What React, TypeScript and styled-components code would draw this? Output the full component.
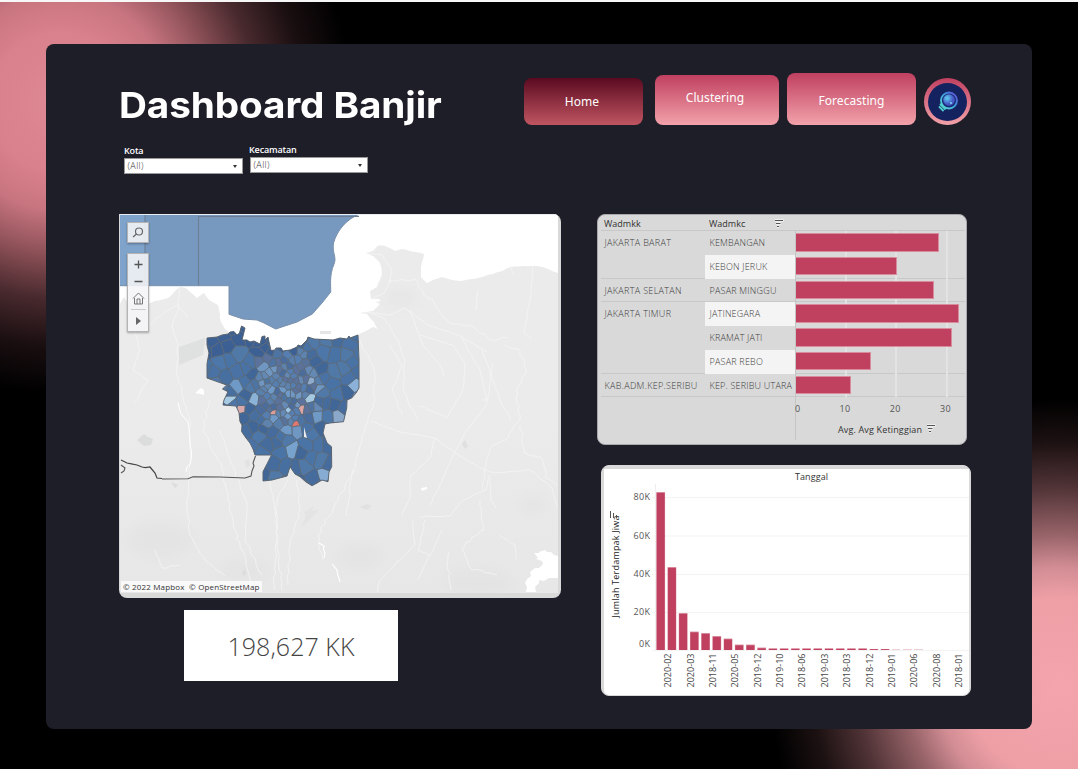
import React from "react";
import styled, { createGlobalStyle } from "styled-components";

const Global = createGlobalStyle`
  * { box-sizing: border-box; }
  body { margin: 0; background: #000; font-family: "Open Sans", "Noto Sans", sans-serif; }
`;

const Page = styled.div`
  height: 769px;
  padding: 42px 46px 0;
  border-top: 2px solid #f7f7f7;
  background:
    radial-gradient(circle at 60px 100px, #de8994 0, #d9818c 70px, #c87580 108px, #93545b 148px, #492a2e 196px, #190e10 245px, transparent 292px),
    radial-gradient(circle at 1058px 685px, #f4a4ac 0, #ee9fa6 90px, #d28d94 120px, #966368 153px, #503336 200px, #1c1112 245px, transparent 288px),
    #000;
`;

const Panel = styled.main`
  height: 685px;
  padding: 29px 61px 0 73px;
  border-radius: 8px;
  background: #1e1e29;
`;

const Header = styled.header`
  display: flex;
  justify-content: space-between;
  height: 52px;
`;

const Title = styled.h1`
  width: 300px;
  margin: 9px 0 0;
  color: #fff;
  font: 700 36px/46px Inter, sans-serif;
  letter-spacing: -0.1px;
  white-space: nowrap;
  transform: scaleX(1.075);
  transform-origin: 0 0;
`;

const Nav = styled.nav`
  display: flex;
  align-items: flex-end;
`;

const NavButton = styled.button<{ $w: number; $h: number; $gap: number; $pad: string; $active?: boolean }>`
  width: ${(p) => p.$w}px;
  height: ${(p) => p.$h}px;
  margin: 0 ${(p) => p.$gap}px 0 0;
  padding: ${(p) => p.$pad};
  border: 0;
  border-radius: 8px;
  color: #fff;
  font: 400 12px "Noto Sans", sans-serif;
  letter-spacing: 0.05px;
  background: ${(p) => (p.$active ? "linear-gradient(#5a0a20, #c05561)" : "linear-gradient(#c04060, #f2a2aa)")};
`;

const Avatar = styled.div`
  display: flex;
  align-items: center;
  justify-content: center;
  width: 47px;
  height: 47px;
  border-radius: 50%;
  background: linear-gradient(#c04060, #f2a2aa);
`;

const Filters = styled.div`
  display: flex;
  gap: 7px;
  height: 89px;
  padding: 18px 0 0 5px;
`;

const Filter = styled.label<{ $raise?: boolean }>`
  display: block;
  width: 119px;
  margin-top: ${(p) => (p.$raise ? 0 : 1)}px;
  margin-left: ${(p) => (p.$raise ? -1 : 0)}px;
  color: #fff;
  font: 600 9px/14px "Open Sans", sans-serif;
  letter-spacing: -0.15px;
`;

const Select = styled.span<{ $shift?: boolean }>`
  display: flex;
  align-items: center;
  justify-content: space-between;
  width: ${(p) => (p.$shift ? 118 : 119)}px;
  height: 16px;
  margin-left: ${(p) => (p.$shift ? 1 : 0)}px;
  padding: 0 5px 0 2.5px;
  border: 1px solid #999;
  background: #fff;
  color: #333;
  font-weight: 300;
  letter-spacing: 0.4px;
`;

const Arrow = styled.i`
  border: 2px solid transparent;
  border-top: 3px solid #333;
  border-bottom: 0;
`;

const Body = styled.div`
  display: flex;
  justify-content: space-between;
`;

const Column = styled.section<{ $gap: number }>`
  display: flex;
  flex-direction: column;
  gap: ${(p) => p.$gap}px;
`;

const MapCard = styled.div`
  display: grid;
  width: 442px;
  height: 384px;
  padding: 0 0 0 1px;
  border-radius: 0 8px 8px 8px;
  background: #d9d9d9;
  overflow: hidden;
  & > * { grid-area: 1 / 1; }
`;

const MapControls = styled.div`
  display: flex;
  flex-direction: column;
  gap: 10px;
  padding: 8px 0 0 7px;
  z-index: 1;
  justify-self: start;
`;

const ControlBox = styled.div<{ $h: number }>`
  width: 22px;
  height: ${(p) => p.$h}px;
  border: 1px solid #b4b4b4;
  background: rgba(245, 245, 247, 0.88);
  box-shadow: 0 1px 2px rgba(0, 0, 0, 0.3);
  svg { display: block; }
`;

const Attribution = styled.div`
  z-index: 1;
  align-self: end;
  justify-self: start;
  width: 141px;
  height: 11px;
  margin: 0 0 6px 1px;
  padding-left: 2px;
  background: rgba(255, 255, 255, 0.75);
  color: #333;
  font: 400 8px/11px "Open Sans", sans-serif;
  letter-spacing: 0.16px;
  white-space: pre;
`;

const Kpi = styled.div`
  display: flex;
  align-items: center;
  justify-content: center;
  width: 214px;
  height: 71px;
  margin-left: 65px;
  padding-top: 1px;
  background: #fff;
  color: #444;
  font: 300 25px "Open Sans", sans-serif;
  letter-spacing: 0.05px;
`;

const TableCard = styled.div`
  width: 370px;
  height: 231px;
  padding: 0 1px 0 3px;
  border: 1px solid #a9a9ad;
  border-radius: 8px;
  background: #d9d9d9;
  color: #3c3c3c;
  font: 300 9px "Open Sans", sans-serif;
`;

const TableHead = styled.div`
  display: grid;
  grid-template-columns: 105px 66px 1fr;
  height: 16px;
  padding-left: 3px;
  border-bottom: 1px solid #c8c8c8;
  color: #333;
  font-weight: 400;
  line-height: 17px;
  svg { margin-top: 4px; }
`;

const Row = styled.div<{ $line?: boolean }>`
  display: grid;
  grid-template-columns: 104px 90px 1fr;
  height: 23.75px;
  line-height: 23px;
  white-space: nowrap;
  box-shadow: ${(p) => (p.$line ? "inset 0 -1px #c8c8c8" : "none")};
`;

const City = styled.span`
  padding-left: 3.5px;
  letter-spacing: 0.32px;
`;

const District = styled.span<{ $band?: boolean }>`
  padding-left: 4.5px;
  letter-spacing: 0.2px;
  background: ${(p) => (p.$band ? "#f4f4f4" : "transparent")};
`;

const Track = styled.div`
  display: flex;
  align-items: flex-start;
  padding-top: 2px;
  border-left: 1px solid #c5c5c5;
  background:
    linear-gradient(#e3e3e3, #e3e3e3) 49px 0 / 2px 100% no-repeat,
    linear-gradient(#e3e3e3, #e3e3e3) 99px 0 / 2px 100% no-repeat,
    linear-gradient(#e3e3e3, #e3e3e3) 150px 0 / 2px 100% no-repeat;
`;

const Bar = styled.div`
  height: 18.5px;
  border: 1px solid #d98c9d;
  border-left: 0;
  background: #c04060;
`;

const Axis = styled.div`
  display: flex;
  flex-direction: column;
  height: 43px;
  margin-left: 194px;
  border-left: 1px solid #c5c5c5;
`;

const Ticks = styled.div`
  display: flex;
  height: 22px;
  line-height: 23px;
  font-weight: 400;
  font-size: 9px;
  color: #555;
  letter-spacing: 0.3px;
  span { flex: 0 0 50.3px; }
  span:first-child { flex-basis: 44.5px; margin-left: -1px; }
`;

const AxisTitle = styled.div`
  display: flex;
  align-items: center;
  gap: 5px;
  padding: 0 0 0 42px;
  color: #333;
  font-weight: 400;
  line-height: 21px;
  letter-spacing: 0.15px;
  white-space: nowrap;
  svg { margin-bottom: 3px; }
`;

const ChartCard = styled.div`
  width: 370px;
  height: 231px;
  margin-left: 4px;
  padding: 3px 1px 1px 2px;
  border: 1px solid #d9d9d9;
  border-radius: 8px;
  background: #d9d9d9;
  overflow: hidden;
  svg { display: block; border-radius: 0 0 5px 5px; }
`;

/* Seeded generator, so that the map is drawn the same every time */
const random = (seed: number) => () => {
  seed = (seed * 1664525 + 1013904223) >>> 0;
  return seed / 4294967296;
};

type P = [number, number];
const toPath = (pts: P[]) => "M" + pts.map((p) => p[0].toFixed(1) + " " + p[1].toFixed(1)).join("L");

/* Adds natural roughness to a polyline */
const rough = (pts: P[], amount: number, seed: number): P[] => {
  const r = random(seed);
  const out: P[] = [];
  pts.forEach((p, i) => {
    out.push(p);
    const q = pts[i + 1];
    if (!q) return;
    const n = Math.floor(Math.hypot(q[0] - p[0], q[1] - p[1]) / 4);
    for (let k = 1; k < n; k++) {
      const t = k / n;
      out.push([p[0] + (q[0] - p[0]) * t + (r() - 0.5) * amount, p[1] + (q[1] - p[1]) * t + (r() - 0.5) * amount]);
    }
  });
  return out;
};

const coast: P[] = [
  [207, 338], [217, 337], [222, 335], [228, 334], [230, 332], [234, 331.5], [237, 335], [239.5, 333], [241.5, 326], [245, 328], [242, 340], [247, 340], [250, 342], [254, 341], [260, 344], [262, 336.5], [265, 336], [265, 340], [268, 337], [269, 342], [271, 350.5], [275, 350], [276, 348], [281, 348], [283, 351], [290, 350], [297, 347], [298, 345], [301, 346], [307, 340], [308, 337], [314, 339], [333, 340], [340, 338], [347, 339], [349, 336], [350, 338], [358, 335],
];
const region: P[] = [
  ...coast, [359, 360], [359, 388], [356, 393], [351.7, 398], [347, 400], [346.7, 408], [343.5, 421.7], [330, 423], [325, 424], [323, 433], [327, 443], [331.5, 446.7], [331.7, 466.7], [329, 472], [328, 481.7], [322, 480], [317, 483], [312, 485.7], [306, 482], [300, 476.7], [295, 474], [290, 466.7], [287, 476], [272, 480], [263, 481], [263, 471.7], [267, 464], [271.5, 455], [255, 455], [253, 449], [250, 443], [246, 438], [241.7, 431.7], [242, 425], [240, 421.7], [239, 412.7], [236, 406], [223, 405], [224, 400], [228, 391.7], [222.5, 389], [226.7, 385], [207, 378], [207, 364], [209, 353], [207, 345],
];

const clipCell = (cell: P[], a: P, b: P): P[] => {
  const mx = (a[0] + b[0]) / 2, my = (a[1] + b[1]) / 2;
  const dx = b[0] - a[0], dy = b[1] - a[1];
  const side = (p: P) => (p[0] - mx) * dx + (p[1] - my) * dy;
  const out: P[] = [];
  cell.forEach((p, i) => {
    const q = cell[(i + 1) % cell.length];
    const s = side(p), t = side(q);
    if (s <= 0) out.push(p);
    if (s * t < 0) {
      const k = s / (s - t);
      out.push([p[0] + (q[0] - p[0]) * k, p[1] + (q[1] - p[1]) * k]);
    }
  });
  return out;
};

const buildDistricts = () => {
  const r = random(77);
  const sites: P[] = [];
  const wanted: P[] = [[241, 409], [301.5, 408], [296, 423.5], [274, 412.5], [230, 399], [309, 398], [338, 416], [325, 476], [289, 410], [354, 385], [311, 381], [255, 399], [292, 450], [291, 421], [301, 421], [297, 429], [294.5, 418.5], [270, 409], [273, 407.5], [278, 413], [274, 417], [307, 409], [298, 405], [234, 404], [230, 393], [241, 402], [243, 417], [349, 379], [347, 392]];
  wanted.forEach((p) => sites.push(p));
  for (let i = 0; i < 12000 && sites.length < 270; i++) {
    const x = 205 + r() * 156, y = 326 + r() * 162;
    const d = Math.hypot(x - 284, (y - 388) / 1.25);
    const min = (d < 24 ? 5 : d < 40 ? 7.4 : 12.4) * (0.7 + r() * 0.4);
    if (sites.every((s) => Math.hypot((s[0] - x) * 1.25, (s[1] - y) * 0.8) > min)) sites.push([x, y]);
  }
  const dark = ["#456c9d", "#4a72a4", "#416798", "#4a74a6", "#476f9f", "#4d77a9", "#4a73a5", "#5079a8"];
  const mid = ["#597fac", "#5b739c", "#577eb0", "#6489b5", "#57739c", "#4e74a4", "#5e83ae", "#6f97c2", "#4b6d9e"];
  const fixed: Record<number, string> = { 0: "#d9aaab", 1: "#dba5a3", 2: "#e07770", 3: "#dc9c98", 4: "#a8cbe5", 5: "#a6c9e2", 6: "#8ba8cb", 7: "#86acd4", 8: "#9fc6e5", 9: "#8bb1d9", 10: "#8faacb", 11: "#8bb3d8", 12: "#78a2ce" };
  return sites.map((s, i) => {
    let cell: P[] = [[200, 320], [365, 320], [365, 490], [200, 490]];
    sites.forEach((o) => { if (o !== s) cell = clipCell(cell, s, o); });
    const d = Math.hypot(s[0] - 286, (s[1] - 388) / 1.3);
    const palette = d < 34 ? mid : dark;
    let fill = fixed[i] || palette[Math.floor(r() * palette.length)];
    if (!fixed[i] && r() < 0.07 && s[1] > 385) fill = "#6f99c6";
    if (!fixed[i] && s[1] < 353 && s[0] < 300) fill = "#3d6094";
    return { d: toPath(cell) + "Z", fill };
  });
};
const districts = buildDistricts();

const roads: [P[], number][] = [
  [[[180, 288], [178, 310], [172, 325], [178, 345], [177, 375], [190, 420], [190, 465], [187, 500], [190, 535], [205, 560], [225, 576]], 2],
  [[[135, 330], [140, 350], [133, 370], [148, 380], [135, 402]], 2],
  [[[150, 325], [165, 312], [178, 305], [188, 318]], 1.5],
  [[[210, 400], [203, 430], [222, 470], [228, 500], [235, 530], [246, 560], [250, 590]], 3],
  [[[220, 430], [232, 465], [247, 505], [245, 540], [262, 575]], 3],
  [[[270, 480], [277, 520], [274, 590]], 2],
  [[[288, 480], [277, 500], [277, 545], [282, 590]], 3],
  [[[297, 480], [300, 510], [290, 545], [288, 585]], 3],
  [[[355, 470], [338, 500], [318, 535], [323, 560]], 3],
  [[[372, 314], [385, 319], [398, 340], [405, 362], [403, 390], [418, 420]], 2],
  [[[362, 313], [376, 313], [390, 315], [405, 308], [428, 325], [460, 336], [487, 352]], 0.8],
  [[[366, 253], [382, 255], [392, 270], [390, 281], [384, 293], [372, 299]], 0.8],
  [[[388, 282], [415, 279], [422, 290], [435, 305], [450, 323], [470, 325], [490, 340], [508, 338]], 3],
  [[[410, 310], [423, 345], [440, 365], [444, 376]], 1],
  [[[420, 335], [453, 345], [465, 363], [463, 390], [447, 418], [420, 406]], 1.4],
  [[[462, 338], [480, 370], [487, 404], [465, 433], [453, 455], [440, 485], [430, 505]], 1.2],
  [[[482, 350], [500, 400], [511, 420]], 1],
  [[[493, 362], [488, 400], [482, 400]], 1],
  [[[505, 345], [520, 350], [526, 370], [516, 390], [520, 420], [505, 440], [490, 448], [486, 465], [483, 490]], 3],
  [[[533, 265], [530, 300], [524, 333], [532, 339]], 0.8],
  [[[510, 266], [514, 275]], 0.5],
  [[[478, 290], [476, 310]], 0.6],
  [[[371, 421], [400, 432], [435, 438], [460, 456], [482, 469], [495, 473], [530, 470], [552, 488], [557, 507]], 0.8],
  [[[435, 438], [430, 458], [411, 475], [409, 500], [402, 515]], 2],
  [[[360, 340], [374, 370], [375, 400], [366, 425], [353, 470], [346, 516]], 2.5],
  [[[390, 345], [402, 365], [392, 390], [402, 415]], 2],
  [[[420, 517], [450, 516], [463, 500], [486, 490], [490, 475]], 1.6],
  [[[413, 520], [415, 545], [395, 565], [380, 580], [378, 592]], 2],
  [[[442, 530], [430, 555], [417, 580]], 2],
  [[[480, 500], [484, 530], [472, 537], [462, 550], [472, 570], [497, 575]], 3],
  [[[500, 535], [515, 545], [516, 560]], 2],
  [[[520, 425], [525, 453], [541, 457], [546, 478], [557, 485]], 3],
  [[[490, 478], [491, 500], [496, 508]], 1],
  [[[449, 552], [448, 570], [451, 590]], 3],
  [[[425, 520], [418, 550], [429, 555]], 2],
  [[[155, 550], [162, 568], [180, 565]], 2],
];

const landWest: P[] = [[120, 304], [124, 297], [128, 303], [148, 304], [155, 301], [168, 298], [176, 290], [180, 287], [186, 288], [197, 298], [204, 293], [209, 300], [218, 305], [221, 322], [225, 329], [233, 334]];
const landEast: P[] = [[359, 334], [366, 331], [373, 327], [378, 329], [374, 322], [370, 318], [367, 314], [360, 313], [373, 311], [380, 304], [376, 302], [381, 301], [379, 299], [371, 299], [370, 291], [377, 287], [382, 274], [380, 263], [373, 256], [366, 253], [373, 251], [378, 245.5], [384, 245.5], [395, 251], [402, 249], [424, 254], [421, 267], [421, 277], [427, 283], [442, 277], [452, 280], [460, 281], [478, 278], [493, 274], [511, 267], [523, 266], [537, 266], [548, 269], [558, 273]];

const MapArt = () => (
  <svg width="438" height="379" viewBox="120 214 438 379">
    <defs>
      <clipPath id="region"><path d={toPath(region) + "Z"} /></clipPath>
      <linearGradient id="relief" x1="0" y1="0" x2="0" y2="1"><stop offset="0.5" stopColor="#ebebeb" /><stop offset="1" stopColor="#e7e7e7" /></linearGradient>
      <filter id="soft"><feGaussianBlur stdDeviation="6" /></filter>
    </defs>
    <rect x="120" y="214" width="438" height="379" fill="#fff" />
    <path d={toPath([...rough(landWest, 1.2, 3), ...coast, ...rough(landEast, 1, 5), [558, 593], [120, 593]]) + "Z"} fill="url(#relief)" />
    <g fill="#e0e0e0" opacity="0.45" filter="url(#soft)">
      <ellipse cx="160" cy="540" rx="34" ry="18" /><ellipse cx="360" cy="556" rx="24" ry="13" /><ellipse cx="478" cy="582" rx="36" ry="14" /><ellipse cx="400" cy="298" rx="16" ry="8" /><ellipse cx="533" cy="505" rx="12" ry="8" /><ellipse cx="245" cy="570" rx="25" ry="12" />
    </g>
    <g fill="#dbdcdc">
      <path d="M179 347L205 338L203 355L179 365Z" opacity=".75" /><path d="M137 440l7-6 4 3 5 2-2 6-7 1z" /><path d="M171 482l7 3-3 3z" /><path d="M245 461l4-2 1 7-4 2z" opacity=".6" /><path d="M242 573l3-4 1 4-2 3z" /><path d="M462 444l3-4 3 6-3 3z" opacity=".7" /><path d="M359 507l8-3 5 2-5 4z" opacity=".6" /><path d="M304 512l11-6-4 5 8-1-17 17 4-12z" opacity=".4" /><path d="M320 331h11v3h-11z" opacity=".7" />
    </g>
    <g fill="none" stroke="#f6f6f6" strokeWidth="0.8" opacity="0.9">
      {roads.map(([pts, n], i) => <path key={i} d={toPath(rough(pts, n, i + 10))} />)}
    </g>
    <g fill="#fff">
      <path d="M421 267L434 265L442 275L427 283L421 277Z" /><path d="M195 393l6-5 3 2v5l-4-1z" /><path d="M421 488l6-1v2l-5 2z" />
      <path d="M534 553l5 0l0-1l6-2l2 2l4 0l3 3l4 1V578l-9 0l-5 3l-5-1l0 3l-4 4l1 5h-10l1-5l-2-4l2-4l4-3l-1-4l5-4l4 0l4-4l-1-3l-6-2l2-1z" />
    </g>
    <path d={toPath(rough([[178, 403], [182, 415], [188, 422], [190, 441], [191, 460], [186, 472]], 2, 8))} fill="none" stroke="#fff" strokeWidth="1" />
    <path d={toPath(rough([[319, 543], [324, 546], [324, 558]], 2, 9)) + toPath(rough([[332, 564], [337, 570], [340, 582]], 2, 4))} fill="none" stroke="#fff" strokeWidth="1.1" />
    <path d="M120 214H360C346 219 337 231 333.500 243C332 254 337 257 334 264C329 276 331 286 330.700 292L322 303L312.300 314L297 322L275.700 329L263 322.500L257 320L243 319L229 314.300V285.700H120Z" fill="#7899bf" stroke="#7890ac" strokeWidth="1" />
    <path d="M120 214H145V285H120Z" fill="#7fa3cb" />
    <path d="M145 214V285.500M198.500 285.500V216.500H359" fill="none" stroke="#6c7f94" strokeWidth="1.1" />
    <path d={toPath(rough([[121, 460], [127, 463], [137, 465], [142, 467], [150, 467], [155, 473], [157, 478], [162, 478.500]], 2.4, 2))} fill="none" stroke="#444" strokeWidth="1.2" />
    <path d="M121 465l4 3-1 3-3 2M162 479L188 478.700L193 476.700L220 477L245 478L251 476L252 471L254 466L253 463L255.500 456" fill="none" stroke="#555" strokeWidth="1.1" />
    <g clipPath="url(#region)">
      {districts.map((c, i) => <path key={i} d={c.d} fill={c.fill} stroke="#5a6876" strokeWidth="0.8" strokeLinejoin="round" />)}
      <path d="M304 427L307 438L304 437Z" fill="#ececec" />
    </g>
    <path d={toPath(region) + "Z"} fill="none" stroke="#596470" strokeWidth="1" />
    <path d="M120 214.500H558" stroke="#e7edf2" />
  </svg>
);

const SortIcon = () => (
  <svg width="9" height="9" viewBox="0 0 9 9">
    <path d="M0 1.500H8.500M1 4.500H6M2 7.500H4" stroke="#f5f5f5" strokeWidth="2.400" />
    <path d="M0 1.500H8M1 4.500H5.500M2 7.500H4" stroke="#555" strokeWidth="1.200" />
  </svg>
);

const rows = [
  { city: "JAKARTA BARAT", name: "KEMBANGAN", v: 28.4 },
  { city: "", name: "KEBON JERUK", v: 20, band: true, line: true },
  { city: "JAKARTA SELATAN", name: "PASAR MINGGU", v: 27.5, line: true },
  { city: "JAKARTA TIMUR", name: "JATINEGARA", v: 32.5, band: true },
  { city: "", name: "KRAMAT JATI", v: 31.1 },
  { city: "", name: "PASAR REBO", v: 14.9, band: true, line: true },
  { city: "KAB.ADM.KEP.SERIBU", name: "KEP. SERIBU UTARA", v: 11, line: true },
];

const tops = [492, 567, 613, 631.5, 633, 636, 638.5, 644.5, 644.5, 647.5, 648.5, 648.5, 648.5, 648.5, 648.5, 648.5, 648.5, 648.5, 648.5, 649, 649];
const months = ["2020-02", "2020-03", "2018-11", "2020-05", "2019-12", "2019-10", "2018-06", "2019-03", "2018-03", "2018-12", "2019-01", "2020-06", "2020-08", "2018-01"];
const levels: [string, number, number][] = [["80K", 497.5, 497], ["60K", 536, 536], ["40K", 574.5, 574], ["20K", 612.5, 612], ["0K", 650.5, 644]];

const MonthChart = () => (
  <svg width="365" height="226" viewBox="604 469 365 226" fontFamily="Open Sans, sans-serif" fontSize="9" fill="#444">
    <rect x="604" y="469" width="365" height="226" fill="#fff" />
    <text x="795" y="480" fill="#333" textLength="33">Tanggal</text>
    <path d="M655.500 484V650" stroke="#eee" />
    {levels.map(([label, line, y]) => (
      <g key={label}>
        <path d={`M652 ${line}H969`} stroke="#f3f3f3" />
        <text x="650" y={y + 3.3} textAnchor="end" fill="#555" textLength={label === "0K" ? 11 : 16.500}>{label}</text>
      </g>
    ))}
    {tops.map((t, i) => (
      <g key={i}>
        <rect x={656.3 + i * 11.22} y={t} width="8.800" height={650 - t} fill="#dd9cab" />
        <rect x={656.7 + i * 11.22} y={t + (t < 648 ? 0.8 : 0.2)} width="8" height={650 - t - (t < 648 ? 0.8 : 0.2)} fill="#c04060" />
      </g>
    ))}
    <path d="M892 649.500h8M903 649.500h9M914 649.500h9" stroke="#efd0d8" />
    {months.map((m, i) => (
      <text key={m} transform={`translate(${671.3 + i * 22.36} 687.500) rotate(-90)`} textLength="34">{m}</text>
    ))}
    <text transform="translate(619 617.500) rotate(-90)" fill="#222" textLength="102">Jumlah Terdampak Jiwa</text>
    <path d="M610.500 518V511M613.500 518V513M616.500 518V515" stroke="#555" />
  </svg>
);

export default function App() {
  return (
    <>
      <Global />
      <Page>
        <Panel>
          <Header>
            <Title>Dashboard Banjir</Title>
            <Nav>
              <NavButton $w={119} $h={47} $gap={12} $pad="0 3px 0 0" $active>Home</NavButton>
              <NavButton $w={124} $h={50} $gap={8} $pad="0 4px 5px 0">Clustering</NavButton>
              <NavButton $w={129} $h={52} $gap={8} $pad="3px 0 0 0">Forecasting</NavButton>
              <Avatar>
                <svg width="39" height="38" viewBox="0 0 39 38">
                  <defs>
                    <linearGradient id="ring" x1="1" y1="0" x2="0" y2="1"><stop stopColor="#6443d4" /><stop offset=".5" stopColor="#3ba4df" /><stop offset="1" stopColor="#62e4cf" /></linearGradient>
                    <radialGradient id="lens" cx=".35" cy=".35"><stop stopColor="#5fd0f0" /><stop offset="1" stopColor="#4657c6" /></radialGradient>
                  </defs>
                  <ellipse cx="19.500" cy="19" rx="19.500" ry="19" fill="#14235f" />
                  <circle cx="21" cy="17.500" r="8" fill="#182b74" stroke="url(#ring)" strokeWidth="1.800" />
                  <circle cx="21" cy="17" r="5.800" fill="url(#lens)" />
                  <circle cx="23" cy="20" r="1" fill="#7edcf1" />
                  <path d="M12.500 21.500L17 26M11.500 24l3.500 3.500" stroke="#4dcfcf" strokeWidth="1.800" strokeLinecap="round" />
                </svg>
              </Avatar>
            </Nav>
          </Header>
          <Filters>
            <Filter>Kota<Select>(All)<Arrow /></Select></Filter>
            <Filter $raise>Kecamatan<Select $shift>(All)<Arrow /></Select></Filter>
          </Filters>
          <Body>
            <Column $gap={12}>
              <MapCard>
                <MapArt />
                <MapControls>
                  <ControlBox $h={21}>
                    <svg width="20" height="19" fill="none" stroke="#666" strokeWidth="1.200"><circle cx="11" cy="8.500" r="3.500" /><path d="M8.500 11L5 14" /></svg>
                  </ControlBox>
                  <ControlBox $h={79}>
                    <svg width="20" height="77" fill="none" stroke="#555">
                      <path d="M6.500 10.500h8M10.500 6.500v8M6.500 27.500h8" strokeWidth="1.300" />
                      <path d="M5 44.500L10.500 39L16 44.500M6.500 44v6h8v-6M9 50v-5h3v5" stroke="#777" />
                      <path d="M3 55.500h15" stroke="#ccc" />
                      <path d="M8 63v8l5-4z" fill="#666" stroke="none" />
                    </svg>
                  </ControlBox>
                </MapControls>
                <Attribution>© 2022 Mapbox  © OpenStreetMap</Attribution>
              </MapCard>
              <Kpi>198,627 KK</Kpi>
            </Column>
            <Column $gap={20}>
              <TableCard>
                <TableHead><span>Wadmkk</span><span>Wadmkc</span><SortIcon /></TableHead>
                {rows.map((r) => (
                  <Row key={r.name} $line={r.line}>
                    <City>{r.city}</City>
                    <District $band={r.band}>{r.name}</District>
                    <Track><Bar style={{ width: r.v * 5.03 }} /></Track>
                  </Row>
                ))}
                <Axis>
                  <Ticks><span>0</span><span>10</span><span>20</span><span>30</span></Ticks>
                  <AxisTitle>Avg. Avg Ketinggian <SortIcon /></AxisTitle>
                </Axis>
              </TableCard>
              <ChartCard><MonthChart /></ChartCard>
            </Column>
          </Body>
        </Panel>
      </Page>
    </>
  );
}
